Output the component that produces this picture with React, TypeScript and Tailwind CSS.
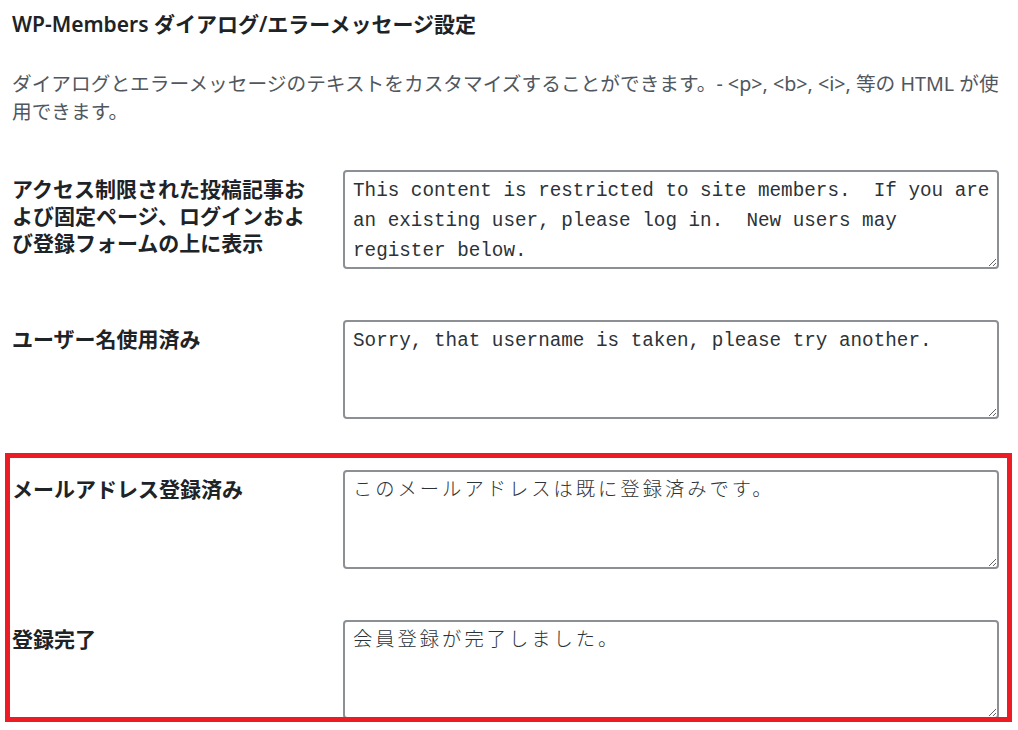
const rows = [
  {
    label: "アクセス制限された投稿記事および固定ページ、ログインおよび登録フォームの上に表示",
    value: "This content is restricted to site members.  If you are an existing user, please log in.  New users may register below.",
  },
  {
    label: "ユーザー名使用済み",
    value: "Sorry, that username is taken, please try another.",
  },
];

const highlighted = [
  { label: "メールアドレス登録済み", value: "このメールアドレスは既に登録済みです。" },
  { label: "登録完了", value: "会員登録が完了しました。" },
];

const Row = ({ label, value, jp }: { label: string; value: string; jp?: boolean }) => (
  <div className="grid grid-cols-[331px_656px] mb-[51px]">
    <div className="pt-[6px] w-[300px] text-[21px] leading-[27px] font-bold text-[#1d2327]">{label}</div>
    <textarea
      defaultValue={value}
      className={`h-[99px] w-[656px] rounded-[4px] border-2 border-[#8c8f94] bg-white pt-[4px] pl-[8px] pr-[6px] text-[19.3px] leading-[30px] text-[#2c3338] outline-none ${jp ? "tracking-[3px] font-light" : ""}`}
      style={{ fontFamily: '"Liberation Mono", "Noto Sans CJK JP", monospace' }}
    />
  </div>
);

export default function App() {
  return (
    <div
      className="h-[730px] w-[1018px] bg-white pl-3 pt-[11px] overflow-hidden"
      style={{ fontFamily: '"Noto Sans", "Noto Sans CJK JP", sans-serif' }}
    >
      <h2 className="text-[21px] leading-[27px] font-semibold text-[#1d2327]">WP-Members ダイアログ/エラーメッセージ設定</h2>
      <p className="mt-8 w-[1000px] text-[19.7px] leading-[28px] text-[#50575e]">
        ダイアログとエラーメッセージのテキストをカスタマイズすることができます。- &lt;p&gt;, &lt;b&gt;, &lt;i&gt;, 等の HTML が使用できます。
      </p>
      <div className="mt-[44px]">
        {rows.map((r) => (
          <Row key={r.label} label={r.label} value={r.value} />
        ))}
        <div className="relative">
          {highlighted.map((r) => (
            <Row key={r.label} label={r.label} value={r.value} jp />
          ))}
          <div className="pointer-events-none absolute -top-[17px] -left-[7px] h-[269px] w-[1007px] border-[5px] border-[#ed1c24]" />
        </div>
      </div>
    </div>
  );
}
